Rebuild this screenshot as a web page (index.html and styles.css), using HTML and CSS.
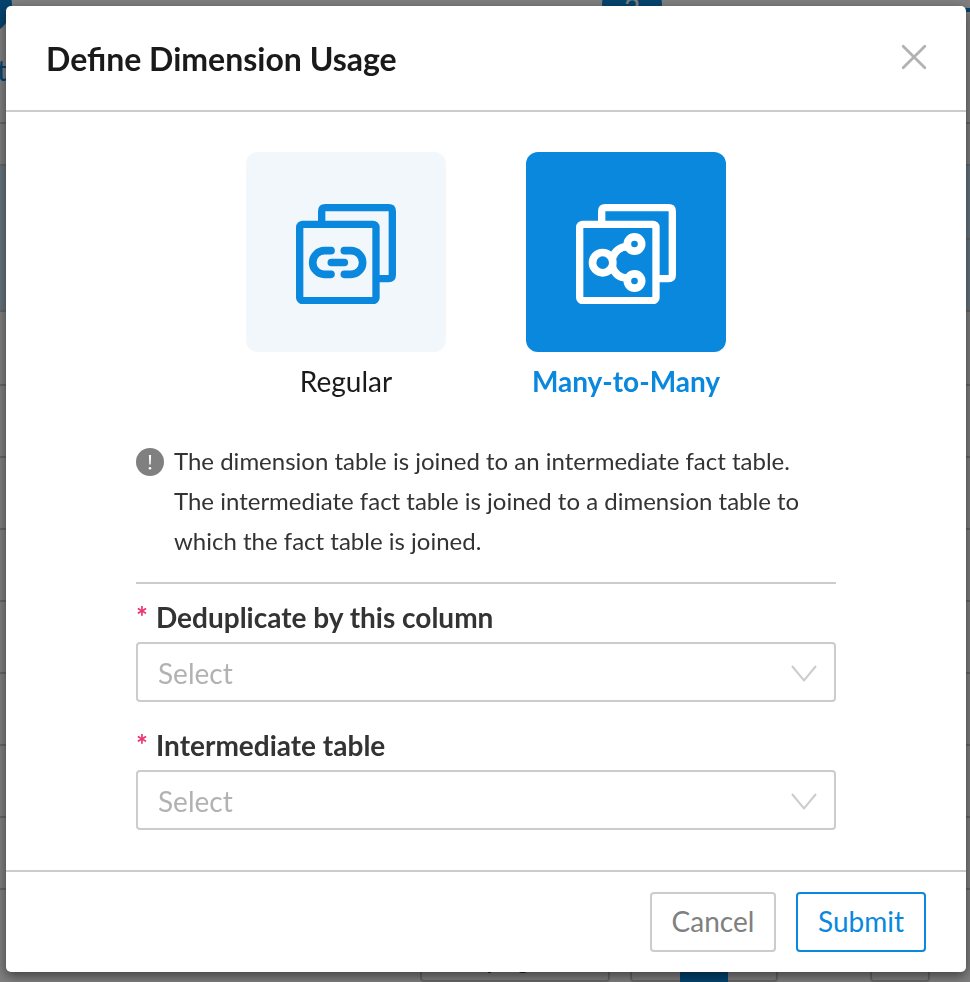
FILE: index.html
```html
<!DOCTYPE html>
<html lang="en">
<head>
<meta charset="utf-8">
<title>Define Dimension Usage</title>
<link rel="stylesheet" href="styles.css">
</head>
<body>
<div class="page">
  <div class="steps">
    <div class="step step-first"><span class="dot"></span><span class="step-name">t</span></div>
    <div class="step step-second"><span class="dot">2</span></div>
    <span class="step-line"></span>
  </div>
  <div class="rows">
    <div class="row head"></div>
    <div class="row active"><i></i></div>
    <div class="row first"></div>
    <div class="row"></div><div class="row"></div><div class="row"></div><div class="row"></div>
    <div class="row"></div><div class="row"></div><div class="row"></div><div class="row"></div>
  </div>
  <div class="pager">
    <span class="page-size">20/page</span>
    <span class="page-list"><b></b></span>
    <span class="page-jump"></span>
  </div>
</div>
<div class="mask">
  <section class="modal">
    <header class="modal-head">
      <h1>Define Dimension Usage</h1>
      <svg class="close" viewBox="0 0 24 24"><path d="M1.2 1.2L22.8 22.8M22.8 1.2L1.2 22.8"/></svg>
    </header>
    <main class="modal-body">
      <div class="types">
        <div class="type">
          <div class="tile">
            <svg class="icon" viewBox="48 40 300 301">
              <path stroke-width="22" d="M125 95V62Q125 51 136 51H326Q337 51 337 62V253Q337 264 326 264H296"/>
              <rect stroke-width="22" x="59" y="101" width="229" height="229" rx="9"/>
              <path stroke-width="23" stroke-linecap="round" d="M153 180H133.500A35.500 35.500 0 0 0 133.500 251H153M193 180H212.500A35.500 35.500 0 0 1 212.500 251H193M154 215.500H193"/>
            </svg>
          </div>
          <span>Regular</span>
        </div>
        <div class="type selected">
          <div class="tile">
            <svg class="icon" viewBox="48 40 300 301">
              <path stroke-width="22" d="M125 95V62Q125 51 136 51H326Q337 51 337 62V253Q337 264 326 264H296"/>
              <rect stroke-width="22" x="59" y="101" width="229" height="229" rx="9"/>
              <g stroke-width="23">
                <circle cx="128" cy="216" r="30.500"/>
                <circle cx="223.500" cy="160" r="21.500"/>
                <circle cx="223.500" cy="271" r="21.500"/>
                <path d="M203 168C180 168 164 182 157 202M157 229C164 249 180 262 203 262"/>
              </g>
            </svg>
          </div>
          <span>Many-to-Many</span>
        </div>
      </div>
      <div class="tip">
        <svg class="info" viewBox="0 0 28 28"><circle cx="14" cy="14" r="14"/><path d="M12.900 7h2.200l-.4 9.500h-1.400z"/><circle class="point" cx="14" cy="20.200" r="1.300"/></svg>
        <p>The dimension table is joined to an intermediate fact table.<br>The intermediate fact table is joined to a dimension table to<br>which the fact table is joined.</p>
      </div>
      <div class="field">
        <label><em>*</em>Deduplicate by this column</label>
        <div class="select">Select<svg viewBox="0 0 26 18"><path d="M1 1L13 15.500L25 1"/></svg></div>
      </div>
      <div class="field">
        <label><em>*</em>Intermediate table</label>
        <div class="select">Select<svg viewBox="0 0 26 18"><path d="M1 1L13 15.500L25 1"/></svg></div>
      </div>
    </main>
    <footer class="modal-foot">
      <button class="btn">Cancel</button>
      <button class="btn primary">Submit</button>
    </footer>
  </section>
</div>
</body>
</html>
```
FILE: styles.css
```css
* { box-sizing: border-box; }
html, body { height: 100%; margin: 0; overflow: hidden; }
body { font-family: Lato, "Liberation Sans", sans-serif; font-size: 28px; color: #333; }

.page { height: 982px; overflow: hidden; background: #fff; }
.steps { position: relative; height: 122px; overflow: hidden; }
.step { position: absolute; top: -25px; width: 60px; color: #0988de; }
.step-first { left: -48px; }
.step-second { left: 602px; }
.dot { display: block; height: 60px; border-radius: 50%; background: #0988de; color: #fff; text-align: center; line-height: 66px; }
.step-name { display: block; margin: 15px 0 0 45px; line-height: 40px; }
.step-line { position: absolute; top: 8px; left: 700px; right: 0; height: 4px; background: #0988de; }
.row { height: 72px; border-top: 2px solid #ccc; }
.row.head { height: 42px; background: #fafafa; }
.row.active { height: 146px; background: #cae7fa; }
.row.active i { display: block; width: 485px; height: 74px; margin-left: auto; border-bottom: 2px solid #ccc; }
.row.first { height: 74px; }
.pager { position: absolute; top: 922px; left: 420px; display: flex; height: 60px; }
.pager span { border: 2px solid #ccc; border-radius: 4px; }
.page-size { width: 190px; padding-left: 20px; line-height: 67px; }
.page-list { width: 148px; margin-left: 20px; padding-left: 48px; }
.page-list b { display: block; width: 48px; height: 60px; background: #0988de; }
.page-jump { width: 60px; margin-left: 92px; }

.mask { position: fixed; inset: 0; padding: 6px 4px 10px 6px; background: rgba(0, 0, 0, .5); }
.modal { display: flex; flex-direction: column; height: 966px; border-radius: 5px; background: #fff; box-shadow: 0 4px 12px rgba(0, 0, 0, .5); }
.modal-head { display: flex; align-items: center; justify-content: space-between; height: 106px; padding: 0 40px; border-bottom: 2px solid #ccc; }
.modal-head h1 { margin: 0; font-size: 32px; font-weight: 700; color: #1a1a1a; }
.close { width: 24px; height: 24px; margin: -3px 0 0; fill: none; stroke: #b2b2b2; stroke-width: 2.8; stroke-linecap: round; overflow: visible; }
.modal-body { flex: 1; width: 700px; margin: 0 0 0 130px; padding-top: 40px; }
.types { display: flex; justify-content: center; gap: 80px; color: #1a1a1a; }
.type { width: 200px; text-align: center; white-space: nowrap; }
.type span { display: block; margin: 9px 0 1px; line-height: 40px; }
.tile { display: flex; align-items: center; justify-content: center; height: 200px; padding-top: 3.300px; border-radius: 12px; background: #f2f7fb; }
.icon { width: 100px; height: 100.300px; fill: none; stroke: #0988de; }
.selected { color: #0988de; font-weight: 700; }
.selected .tile { background: #0988de; }
.selected .icon { stroke: #fff; }
.tip { display: flex; gap: 10px; margin-top: 40px; padding-bottom: 20px; border-bottom: 2px solid #ccc; }
.tip p { margin: -1px 0 1px; font-size: 24px; line-height: 40px; white-space: nowrap; }
.info { width: 28px; height: 28px; margin-top: 6px; fill: #808080; }
.info path, .info .point { fill: #fff; }
.field { margin-bottom: 24px; }
.tip + .field { margin-top: 14px; }
.field label { display: flex; height: 44px; line-height: 38px; font-weight: 700; }
.field em { width: 20px; line-height: 36px; font-style: normal; font-weight: 700; color: #e73371; }
.select { display: flex; align-items: center; justify-content: space-between; height: 60px; padding: 2px 17px 0 20px; border: 2px solid #ccc; border-radius: 4px; color: #b2b2b2; }
.select svg { width: 26px; height: 18px; margin-top: 2px; fill: none; stroke: #ccc; stroke-width: 2; }
.modal-foot { display: flex; justify-content: flex-end; gap: 20px; height: 102px; padding: 20px 40px; border-top: 2px solid #ccc; }
.btn { width: 126px; height: 60px; padding: 0 0 2px; border: 2px solid #ccc; border-radius: 4px; background: #fff; color: #808080; font: 400 28px Lato, sans-serif; }
.btn.primary { width: 130px; border-color: #0988de; color: #0988de; }
```
